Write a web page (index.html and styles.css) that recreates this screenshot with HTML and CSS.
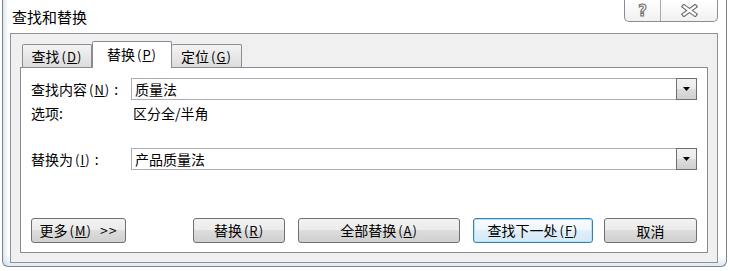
FILE: index.html
```html
<!DOCTYPE html>
<html lang="zh-CN">
<head>
    <meta charset="UTF-8">
    <title>查找和替换</title>
    <link rel="stylesheet" href="styles.css">
</head>
<body>
    <div class="window">
        <div class="titlebar">
            <span class="title">查找和替换</span>
            <div class="caption-btns">
                <span class="cap help">?</span>
                <span class="cap close">
                    <svg width="17" height="13" viewBox="0 0 17 13">
                        <path d="M3 2.5 L14 10.5 M14 2.5 L3 10.5" stroke="#6b6b6b" stroke-width="4.5" stroke-linecap="square" fill="none"/>
                        <path d="M3 2.5 L14 10.5 M14 2.5 L3 10.5" stroke="#ffffff" stroke-width="2.2" stroke-linecap="square" fill="none"/>
                    </svg>
                </span>
            </div>
        </div>

        <div class="client">
            <div class="tabs">
                <div class="tab">查找<span class="key">(<u>D</u>)</span></div>
                <div class="tab active">替换<span class="key">(<u>P</u>)</span></div>
                <div class="tab">定位<span class="key">(<u>G</u>)</span></div>
            </div>

            <div class="panel">
                <div class="row">
                    <span class="label">查找内容<span class="key">(<u>N</u>)</span><span class="colon">:</span></span>
                    <div class="combo">
                        <span class="combo-text">质量法</span>
                        <span class="drop">
                            <svg width="7" height="4" viewBox="0 0 7 4"><path d="M0 0 H7 L3.5 4 Z" fill="#000"/></svg>
                        </span>
                    </div>
                </div>

                <div class="row options">
                    <span class="label">选项:</span>
                    <span class="option-text">区分全/半角</span>
                </div>

                <div class="row replace">
                    <span class="label">替换为<span class="key">(<u>I</u>)</span><span class="colon">:</span></span>
                    <div class="combo">
                        <span class="combo-text">产品质量法</span>
                        <span class="drop">
                            <svg width="7" height="4" viewBox="0 0 7 4"><path d="M0 0 H7 L3.5 4 Z" fill="#000"/></svg>
                        </span>
                    </div>
                </div>

                <div class="buttons">
                    <button class="btn more">更多<span class="key">(<u>M</u>)</span><span class="chevrons">&gt;&gt;</span></button>
                    <button class="btn replace-one">替换<span class="key">(<u>R</u>)</span></button>
                    <button class="btn replace-all">全部替换<span class="key">(<u>A</u>)</span></button>
                    <button class="btn find-next default">查找下一处<span class="key">(<u>F</u>)</span></button>
                    <button class="btn cancel">取消</button>
                </div>
            </div>
        </div>
    </div>
</body>
</html>
```

FILE: styles.css
```css
body {
    margin: 0;
    background: #fff;
    font-family: "Noto Sans CJK SC", "Liberation Sans", sans-serif;
    font-size: 14px;
    color: #000;
}
.window {
    margin-left: 2px;
    width: 725px;
    height: 267px;
    box-sizing: border-box;
    border: 1px solid #7b8390;
    border-top: none;
    border-radius: 0 0 6px 6px;
    background: linear-gradient(to bottom, #ffffff 0, #ffffff 255px, #e3edf8 264px);
    box-shadow: inset 5px 0 4px -3px #d3deea;
}
.titlebar {
    height: 33px;
    display: flex;
    justify-content: space-between;
}
.title {
    padding-left: 9px;
    font-size: 15px;
    line-height: 34px;
}
.caption-btns {
    display: flex;
    height: 21px;
    margin-right: 8px;
    border: 1px solid #8d8d8d;
    border-top: none;
    border-radius: 0 0 5px 5px;
    background: linear-gradient(to bottom, #ffffff, #f1f1f1);
}
.cap {
    display: flex;
    align-items: center;
    justify-content: center;
}
.help {
    width: 35px;
    border-right: 1px solid #a9a9a9;
    font-family: "DejaVu Sans", sans-serif;
    font-size: 15px;
    font-weight: bold;
    color: #fff;
    -webkit-text-stroke: 1px #6b6b6b;
}
.close {
    width: 56px;
}
.client {
    margin-left: 7px;
    width: 708px;
    height: 230px;
    box-sizing: border-box;
    border: 1px solid #8e9296;
    background: #f0f0f0;
    padding: 7px 9px 9px;
}
.tabs {
    display: flex;
    align-items: flex-end;
    height: 26px;
    padding-left: 2px;
}
.tab {
    box-sizing: border-box;
    width: 70px;
    height: 23px;
    border: 1px solid #898c95;
    border-bottom: none;
    border-radius: 2px 2px 0 0;
    background: linear-gradient(to bottom, #f4f4f4, #dcdcdc);
    text-align: center;
    line-height: 22px;
}
.tab + .tab {
    border-left: none;
}
.tab.active {
    position: relative;
    z-index: 1;
    width: 80px;
    height: 27px;
    margin-bottom: -1px;
    border-left: 1px solid #898c95;
    background: #fff;
    line-height: 25px;
}
.tab.active + .tab {
    border-left: none;
}
.key {
    font-size: 13px;
    margin-left: 2px;
    letter-spacing: 1px;
}
.key u {
    text-underline-offset: 1px;
}
.colon {
    margin-left: 4px;
}
.chevrons {
    margin-left: 8px;
    letter-spacing: 1px;
}
.panel {
    box-sizing: border-box;
    height: 186px;
    border: 1px solid #898c95;
    background: #fff;
    padding: 10px 10px 0;
}
.row {
    display: flex;
    align-items: center;
    height: 22px;
}
.label {
    width: 100px;
    flex-shrink: 0;
    white-space: nowrap;
}
.combo {
    flex: 1;
    display: flex;
    height: 22px;
    box-sizing: border-box;
    border: 1px solid #abadb3;
    background: #fff;
}
.combo-text {
    flex: 1;
    padding-left: 3px;
    line-height: 20px;
}
.drop {
    width: 21px;
    margin: -1px -1px -1px 0;
    box-sizing: border-box;
    border: 1px solid #6f6f6f;
    background: linear-gradient(to bottom, #f2f2f2, #ebebeb 50%, #dddddd 50%, #cfcfcf);
    display: flex;
    align-items: center;
    justify-content: center;
}
.options {
    margin-top: 4px;
    height: 18px;
}
.option-text {
    padding-left: 2px;
}
.replace {
    margin-top: 26px;
}
.buttons {
    display: flex;
    margin-top: 48px;
}
.btn {
    height: 25px;
    box-sizing: border-box;
    padding: 0;
    border: 1px solid #707070;
    border-radius: 3px;
    background: linear-gradient(to bottom, #f2f2f2, #ebebeb 50%, #dddddd 50%, #cfcfcf);
    font-family: inherit;
    font-size: 14px;
    line-height: 22px;
    color: #000;
}
.more {
    width: 95px;
    margin-right: auto;
}
.replace-one {
    width: 92px;
}
.replace-all {
    width: 162px;
    margin-left: 13px;
}
.find-next {
    width: 120px;
    margin-left: 13px;
}
.cancel {
    width: 93px;
    margin-left: 11px;
}
.btn.default {
    border-color: #3c7fb1;
    box-shadow: inset 0 0 0 1px #b4e1fb;
    background: linear-gradient(to bottom, #f6fbfe, #eef7fd 50%, #e1eff9 50%, #d3e8f6);
}
```
